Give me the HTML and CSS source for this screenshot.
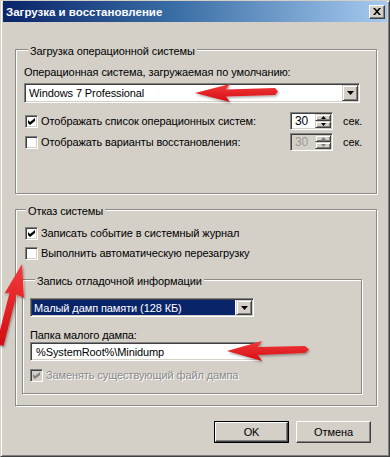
FILE: index.html
```html
<!DOCTYPE html>
<html lang="ru">
<head>
<meta charset="utf-8">
<title>Загрузка и восстановление</title>
<link rel="stylesheet" href="styles.css">
</head>
<body>
<div class="window">
  <div class="titlebar">
    <span class="title">Загрузка и восстановление</span>
    <span class="close"><svg width="8" height="7" viewBox="0 0 8 7"><path d="M0 0h2l2 2.2L6 0h2L5 3.5 8 7H6L4 4.8 2 7H0l3-3.5z" fill="#000"/></svg></span>
  </div>
  <div class="content">
    <div class="group g1">
      <div class="legend">Загрузка операционной системы</div>
      <div class="label l1">Операционная система, загружаемая по умолчанию:</div>
      <div class="combo c1">
        <span class="combo-text">Windows 7 Professional</span>
        <span class="dd"><svg width="7" height="4" viewBox="0 0 7 4"><path d="M0 0h7L3.5 4z" fill="#000"/></svg></span>
      </div>
      <div class="row r1">
        <div class="check">
          <span class="box"><svg width="7" height="7" viewBox="0 0 7 7"><path d="M0 2l2 2 5-4v3L2 7 0 5z" fill="#000"/></svg></span>
          <span>Отображать список операционных систем:</span>
        </div>
        <div class="spin">
          <span class="spin-val">30</span>
          <span class="spin-btns">
            <span class="sb"><svg width="5" height="3" viewBox="0 0 5 3"><path d="M0 3h5L2.5 0z" fill="#000"/></svg></span>
            <span class="sb"><svg width="5" height="3" viewBox="0 0 5 3"><path d="M0 0h5L2.5 3z" fill="#000"/></svg></span>
          </span>
        </div>
        <span class="sec">сек.</span>
      </div>
      <div class="row r2">
        <div class="check">
          <span class="box"></span>
          <span>Отображать варианты восстановления:</span>
        </div>
        <div class="spin disabled">
          <span class="spin-val">30</span>
          <span class="spin-btns">
            <span class="sb"><svg width="5" height="3" viewBox="0 0 5 3"><path d="M0 3h5L2.5 0z" fill="#808080"/></svg></span>
            <span class="sb"><svg width="5" height="3" viewBox="0 0 5 3"><path d="M0 0h5L2.5 3z" fill="#808080"/></svg></span>
          </span>
        </div>
        <span class="sec">сек.</span>
      </div>
    </div>

    <div class="group g2">
      <div class="legend">Отказ системы</div>
      <div class="row r3">
        <div class="check">
          <span class="box"><svg width="7" height="7" viewBox="0 0 7 7"><path d="M0 2l2 2 5-4v3L2 7 0 5z" fill="#000"/></svg></span>
          <span>Записать событие в системный журнал</span>
        </div>
      </div>
      <div class="row r4">
        <div class="check">
          <span class="box"></span>
          <span>Выполнить автоматическую перезагрузку</span>
        </div>
      </div>
      <div class="group g3">
        <div class="legend">Запись отладочной информации</div>
        <div class="combo c2">
          <span class="combo-text selected">Малый дамп памяти (128 КБ)</span>
          <span class="dd"><svg width="7" height="4" viewBox="0 0 7 4"><path d="M0 0h7L3.5 4z" fill="#000"/></svg></span>
        </div>
        <div class="label l2">Папка малого дампа:</div>
        <div class="textbox">%SystemRoot%\Minidump</div>
        <div class="row r5">
          <div class="check disabled">
            <span class="box"><svg width="7" height="7" viewBox="0 0 7 7"><path d="M0 2l2 2 5-4v3L2 7 0 5z" fill="#808080"/></svg></span>
            <span>Заменять существующий файл дампа</span>
          </div>
        </div>
      </div>
    </div>

    <div class="buttons">
      <div class="btn default"><span class="btn-in">OK</span></div>
      <div class="btn"><span class="btn-in">Отмена</span></div>
    </div>
  </div>
</div>
<svg class="arrows" width="390" height="457" viewBox="0 0 390 457">
  <defs>
    <filter id="sh" x="-20%" y="-20%" width="140%" height="140%">
      <feDropShadow dx="1" dy="1.5" stdDeviation="1.2" flood-color="#000" flood-opacity="0.35"/>
    </filter>
    <linearGradient id="rg" x1="0" y1="0" x2="0" y2="1">
      <stop offset="0" stop-color="#f23a3a"/>
      <stop offset="1" stop-color="#d40d12"/>
    </linearGradient>
  </defs>
  <g filter="url(#sh)" fill="url(#rg)">
    <polygon points="195,93 230,84 226,89.5 275,88 278,91.5 275,95 226,96.5 230,102"/>
    <polygon points="227,351 262,341 258,347 305,346 309,349.5 305,353 258,355 262,361"/>
    <polygon points="22,264 24,298 16.6,294.5 3.5,346 -3.5,344 9.6,292.6 4.5,293.5"/>
  </g>
</svg>
</body>
</html>
```

FILE: styles.css
```css
html, body {
  margin: 0;
  padding: 0;
}
body {
  position: relative;
  width: 390px;
  height: 457px;
  background: #d4d0c8;
  font-family: "Liberation Sans", Arial, sans-serif;
  font-size: 11px;
  letter-spacing: -0.1px;
  color: #000;
  overflow: hidden;
}
.window {
  box-sizing: border-box;
  width: 390px;
  height: 457px;
  background: #d4d0c8;
  border: 1px solid;
  border-color: #d4d0c8 #404040 #404040 #d4d0c8;
  box-shadow: inset 1px 1px 0 #fff, inset -1px -1px 0 #808080;
  padding: 0 2px 2px 2px;
  display: flex;
  flex-direction: column;
}
.titlebar {
  height: 21px;
  background: linear-gradient(to right, #0a246a 0%, #3a6ea5 45%, #a6caf0 100%);
  display: flex;
  align-items: center;
  padding: 0 2px 0 3px;
}
.title {
  flex: 1;
  color: #fff;
  font-weight: bold;
  font-size: 11.5px;
  letter-spacing: 0;
}
.close {
  box-sizing: border-box;
  width: 16px;
  height: 14px;
  background: #d4d0c8;
  border: 1px solid;
  border-color: #fff #404040 #404040 #fff;
  box-shadow: inset -1px -1px 0 #808080;
  display: flex;
  align-items: center;
  justify-content: center;
}
.content {
  flex: 1;
  padding: 27px 10px 0 12px;
  display: flex;
  flex-direction: column;
}
.group {
  border: 1px solid #8c8a84;
  box-shadow: inset 1px 1px 0 #fff, 1px 1px 0 #fff;
  display: flex;
  flex-direction: column;
}
.legend {
  align-self: flex-start;
  margin: -6px 0 0 4px;
  padding: 0 2px;
  line-height: 14px;
  background: #d4d0c8;
}
.g1 {
  padding: 0 13px 42px 8px;
}
.label {
  line-height: 14px;
}
.l1 {
  margin-top: 7px;
}
.combo {
  box-sizing: border-box;
  display: flex;
  background: #fff;
  border: 1px solid;
  border-color: #808080 #fff #fff #808080;
  box-shadow: inset 1px 1px 0 #404040, inset -1px -1px 0 #d4d0c8;
  padding: 1px;
}
.c1 {
  height: 20px;
  margin: 4px 3px 0 0;
}
.combo-text {
  flex: 1;
  display: flex;
  align-items: center;
  padding-left: 3px;
}
.combo-text.selected {
  background: #0a246a;
  color: #fff;
  margin-right: 1px;
  padding-left: 2px;
}
.dd {
  box-sizing: border-box;
  width: 16px;
  background: #d4d0c8;
  border: 1px solid;
  border-color: #d4d0c8 #404040 #404040 #d4d0c8;
  box-shadow: inset 1px 1px 0 #fff, inset -1px -1px 0 #808080;
  display: flex;
  align-items: center;
  justify-content: center;
}
.row {
  height: 18px;
  display: flex;
  align-items: center;
}
.r1 {
  margin-top: 9px;
  padding-left: 1px;
  display: grid;
  grid-template-columns: 1fr 43px 30px;
}
.r2 {
  margin-top: 3px;
  padding-left: 1px;
  display: grid;
  grid-template-columns: 1fr 43px 30px;
}
.check {
  display: flex;
  align-items: center;
  gap: 3px;
  white-space: nowrap;
}
.box {
  box-sizing: border-box;
  width: 13px;
  height: 13px;
  background: #fff;
  border: 1px solid;
  border-color: #808080 #fff #fff #808080;
  box-shadow: inset 1px 1px 0 #404040, inset -1px -1px 0 #d4d0c8;
  display: flex;
  align-items: center;
  justify-content: center;
}
.check.disabled {
  color: #8a8a8a;
  text-shadow: 1px 1px 0 #fff;
}
.check.disabled .box {
  background: #d4d0c8;
}
.spin {
  box-sizing: border-box;
  height: 18px;
  display: flex;
  background: #fff;
  border: 1px solid;
  border-color: #808080 #fff #fff #808080;
  box-shadow: inset 1px 1px 0 #404040, inset -1px -1px 0 #d4d0c8;
  padding: 1px;
}
.spin.disabled {
  background: #d4d0c8;
  color: #9a9a9a;
}
.spin-val {
  flex: 1;
  display: flex;
  align-items: center;
  padding-left: 3px;
  font-size: 12px;
}
.spin-btns {
  width: 16px;
  display: flex;
  flex-direction: column;
}
.sb {
  box-sizing: border-box;
  flex: 1;
  background: #d4d0c8;
  border: 1px solid;
  border-color: #d4d0c8 #404040 #404040 #d4d0c8;
  box-shadow: inset 1px 1px 0 #fff, inset -1px -1px 0 #808080;
  display: flex;
  align-items: center;
  justify-content: center;
}
.sec {
  padding-left: 10px;
  white-space: nowrap;
}
.g2 {
  margin-top: 15px;
  padding: 0 14px 11px 6px;
}
.r3 {
  margin-top: 6px;
  padding-left: 3px;
}
.r4 {
  margin-top: 2px;
  padding-left: 3px;
}
.g3 {
  margin-top: 17px;
  padding: 0 8px 9px 7px;
}
.g3 .legend {
  margin-left: 5px;
}
.c2 {
  height: 19px;
  width: 224px;
  margin-top: 10px;
}
.l2 {
  margin-top: 12px;
  line-height: 13px;
}
.textbox {
  box-sizing: border-box;
  height: 19px;
  width: 229px;
  background: #fff;
  border: 1px solid;
  border-color: #808080 #fff #fff #808080;
  box-shadow: inset 1px 1px 0 #404040, inset -1px -1px 0 #d4d0c8;
  padding-left: 5px;
  display: flex;
  align-items: center;
}
.r5 {
  margin-top: 5px;
}
.buttons {
  margin-top: 15px;
  display: flex;
  justify-content: flex-end;
  gap: 7px;
  padding-right: 6px;
}
.btn {
  box-sizing: border-box;
  width: 75px;
  height: 22px;
  background: #d4d0c8;
  border: 1px solid;
  border-color: #fff #404040 #404040 #fff;
  box-shadow: inset -1px -1px 0 #808080;
  display: flex;
}
.btn.default {
  border: 1px solid #000;
  box-shadow: none;
}
.btn-in {
  flex: 1;
  display: flex;
  align-items: center;
  justify-content: center;
}
.btn.default .btn-in {
  border: 1px solid;
  border-color: #fff #404040 #404040 #fff;
  box-shadow: inset -1px -1px 0 #808080;
}
.arrows {
  position: absolute;
  left: 0;
  top: 0;
  pointer-events: none;
}
```
